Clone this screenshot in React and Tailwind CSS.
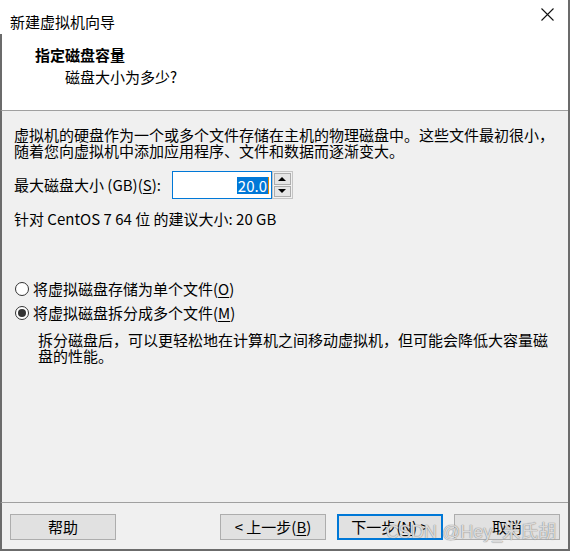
import React from "react";

const FONT = "font-['Noto_Sans_CJK_SC','Noto_Sans',sans-serif]";

function Mn({ children }) {
  return <span className="underline underline-offset-2 decoration-1">{children}</span>;
}

function Radio({ checked, children }) {
  return (
    <div className="flex items-center h-[16px]">
      <span className="w-[14px] h-[14px] ml-[13px] rounded-full border border-[#333] bg-white flex items-center justify-center">
        {checked && <span className="w-[8px] h-[8px] rounded-full bg-[#333]" />}
      </span>
      <span className="ml-[4px]">{children}</span>
    </div>
  );
}

function Btn({ children, primary }) {
  return (
    <button
      className={`w-[106px] h-[26px] bg-[#e1e1e1] text-[15px] leading-[16px] text-black flex items-center justify-center ${
        primary ? "border-2 border-[#0078d7]" : "border border-[#adadad]"
      }`}
    >
      {children}
    </button>
  );
}

export default function App() {
  return (
    <div
      className={`relative w-[570px] h-[551px] bg-white border-r-2 border-b-2 border-[#6b6b6b] flex flex-col overflow-hidden text-black text-[15px] ${FONT}`}
    >
      {/* header */}
      <div className="h-[110px] bg-white flex flex-col shrink-0">
        <div className="h-[34px] flex items-end justify-between pl-[10px] pb-[6px]">
          <span className="leading-[16px] mb-[-2px]">新建虚拟机向导</span>
          <svg width="13" height="13" viewBox="0 0 13 13" className="mr-[14px] mb-[7px]">
            <path d="M0.5 0.5 L12.5 12.5 M12.5 0.5 L0.5 12.5" stroke="#111" strokeWidth="1.1" />
          </svg>
        </div>
        <div className="border-l-2 border-[#6b6b6b] flex-1 flex flex-col">
          <div className="mt-[11px] ml-[33px] font-bold leading-[20px]">指定磁盘容量</div>
          <div className="mt-[2px] ml-[63px] leading-[20px]">磁盘大小为多少?</div>
        </div>
      </div>

      {/* body */}
      <div className="flex-1 bg-[#f0f0f0] border-t border-[#a0a0a0] border-l-2 border-l-[#6b6b6b] flex flex-col pl-[12px] pt-[16px]">
        <p className="leading-[16px]">
          虚拟机的硬盘作为一个或多个文件存储在主机的物理磁盘中。这些文件最初很小，
          <br />
          随着您向虚拟机中添加应用程序、文件和数据而逐渐变大。
        </p>

        <div className="mt-[12px] flex items-center h-[28px]">
          <span className="leading-[16px]">
            最大磁盘大小 (GB)(<Mn>S</Mn>):
          </span>
          <div className="ml-[11px] w-[100px] h-[28px] border border-[#0078d7] bg-white flex items-center justify-end pr-[2px]">
            <span className="bg-[#0078d7] text-white leading-[17px] px-[1px]">20.0</span>
            <span className="w-[1px] h-[17px] bg-[#e08a00]" />
          </div>
          <div className="w-[21px] h-[28px] border border-[#c4c4c4] bg-[#f0f0f0] flex flex-col p-[1px] gap-[1px]">
            <div className="flex-1 bg-[#e5e5e5] border border-[#adadad] flex items-center justify-center">
              <svg width="8" height="4" viewBox="0 0 8 4">
                <path d="M0 4 L4 0 L8 4 Z" fill="#000" />
              </svg>
            </div>
            <div className="flex-1 bg-[#e5e5e5] border border-[#adadad] flex items-center justify-center">
              <svg width="8" height="4" viewBox="0 0 8 4">
                <path d="M0 0 L8 0 L4 4 Z" fill="#000" />
              </svg>
            </div>
          </div>
        </div>

        <p className="mt-[12px] leading-[16px]">针对 CentOS 7 64 位 的建议大小: 20 GB</p>

        <div className="mt-[54px] -ml-[12px] flex flex-col gap-[8px]">
          <Radio>
            将虚拟磁盘存储为单个文件(<Mn>O</Mn>)
          </Radio>
          <Radio checked>
            将虚拟磁盘拆分成多个文件(<Mn>M</Mn>)
          </Radio>
        </div>
        <p className="mt-[11px] ml-[24px] leading-[16px]">
          拆分磁盘后，可以更轻松地在计算机之间移动虚拟机，但可能会降低大容量磁
          <br />
          盘的性能。
        </p>
      </div>

      {/* footer */}
      <div className="h-[47px] shrink-0 bg-[#f0f0f0] border-t border-[#a0a0a0] border-l-2 border-l-[#6b6b6b] flex items-start pt-[11px] pl-[8px]">
        <Btn>帮助</Btn>
        <div className="ml-[104px] flex gap-[11px]">
          <Btn>
            &lt; 上一步(<Mn>B</Mn>)
          </Btn>
          <Btn primary>
            下一步(<Mn>N</Mn>) &gt;
          </Btn>
          <Btn>取消</Btn>
        </div>
      </div>

      {/* watermark */}
      <div className="absolute left-[386px] top-[521px] text-[18px] leading-[22px] text-white/70 font-['Liberation_Sans','Noto_Sans_CJK_SC',sans-serif] [text-shadow:0_0_1px_#888,0_0_1px_#888]">
        CSDN @Hey_米氏胡
      </div>
    </div>
  );
}
